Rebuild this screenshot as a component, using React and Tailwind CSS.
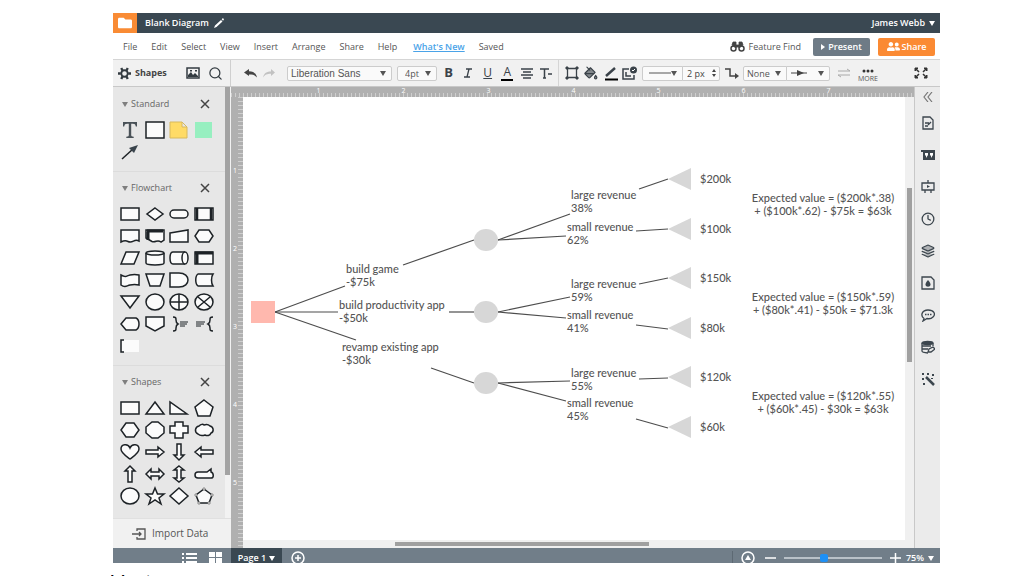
import { useState } from "react";
import { LuSearch, LuPaintBucket, LuClock, LuLayers } from "react-icons/lu";
import { FaFolder, FaUserFriends } from "react-icons/fa";

const MENU = ["File", "Edit", "Select", "View", "Insert", "Arrange", "Share", "Help"];

// every library shape is drawn in a 20 x 16 box
const FLOWCHART = [
    ["Process", <rect x="1" y="2" width="18" height="12" />],
    ["Decision", <path d="M10 2 18 8 10 14 2 8Z" />],
    ["Terminator", <rect x="1" y="4" width="18" height="8" rx="4" />],
    ["Predefined process", <><rect x="1" y="2" width="18" height="12" /><path d="M3 2v12M17 2v12" strokeWidth="2.5" /></>],
    ["Document", <path d="M1 2h18v11c-5-3-6 3-11 .5-3-1.500-5-.5-7 .5Z" />],
    ["Multiple documents", <><path d="M1 2h18v10l-3 2c-4-3-5 1-9-.5L1 10Z" /><path d="M2 3h16M3 4v8" strokeWidth="3" /></>],
    ["Manual input", <path d="M1 5 19 2v12H1Z" />],
    ["Preparation", <path d="M5 2h10l4 6-4 6H5L1 8Z" />],
    ["Data", <path d="M6 2h13l-5 12H1Z" />],
    ["Database", <><path d="M1 3v10c0 2.500 18 2.500 18 0V3" /><ellipse cx="10" cy="3" rx="9" ry="2" /></>],
    ["Direct data", <><path d="M16 2H4C0 2 0 14 4 14h12" /><ellipse cx="16" cy="8" rx="3" ry="6" /></>],
    ["Internal storage", <><rect x="1" y="2" width="18" height="12" /><path d="M1 3h18M3 2v12" strokeWidth="3" /></>],
    ["Paper tape", <path d="M1 3c5 3 5 1 9 0s5-1 9 0v10c-4-1-5-1-9 0s-5 3-9 0Z" />],
    ["Manual operation", <path d="M1 2h18l-4 12H5Z" />],
    ["Delay", <path d="M1 1h9c12 0 12 14 0 14H1Z" />],
    ["Stored data", <path d="M4 2h15c-2 3-2 9 0 12H4C1 12 1 4 4 2Z" />],
    ["Merge", <path d="M1 2h18l-9 12Z" />],
    ["Connector", <ellipse cx="10" cy="8" rx="9" ry="8" />],
    ["Or", <><ellipse cx="10" cy="8" rx="9" ry="8" /><path d="M10 0v16M1 8h18" /></>],
    ["Summing junction", <><ellipse cx="10" cy="8" rx="9" ry="8" /><path d="m4 3 12 10M16 3 4 13" /></>],
    ["Display", <path d="M6 2h10c4 2 4 10 0 12H6L1 8Z" />],
    ["Off-page link", <path d="M1 1h18v9l-9 5-9-5Z" />],
    ["Right brace note", <><path d="M4 1c3 0 3 1 3 3s0 3 2 4c-2 1-2 2-2 4s0 3-3 3" fill="none" /><path d="M11 6h8M11 8h7M11 10h5" strokeWidth="1" /></>],
    ["Left brace note", <><path d="M19 1c-3 0-3 1-3 3s0 3-2 4c2 1 2 2 2 4s0 3 3 3" fill="none" /><path d="M2 6h9M2 8h8M2 10h5" strokeWidth="1" /></>],
    ["Bracket note", <><rect x="2" y="2" width="17" height="12" stroke="none" /><path d="M4 2H1v12h3" fill="none" /></>]
];

const SHAPES = [
    ["Rectangle", <rect x="1" y="2" width="18" height="12" />],
    ["Triangle", <path d="m10 2 9 12H1Z" />],
    ["Right triangle", <path d="M1 2v12h17Z" />],
    ["Pentagon", <path d="m10 0 9 7-3 9H4L1 7Z" />],
    ["Hexagon", <path d="M6 1h8l5 7-5 7H6L1 8Z" />],
    ["Octagon", <path d="M7 0h6l6 5v6l-6 5H7l-6-5V5Z" />],
    ["Cross", <path d="M6 0h8v4h5v7h-5v5H6v-5H1V4h5Z" />],
    ["Cloud", <path d="M5 4c2-2 4-2 5-1 3-1 5 0 6 1 4 1 4 6 1 7-1 3-4 3-6 2-3 1-6 0-7-1-4-2-3-7 1-8Z" />],
    ["Heart", <path d="M10 15C6 12 1 9 1 5c0-5 7-6 9-1 2-5 9-4 9 1 0 4-5 7-9 10Z" />],
    ["Right arrow", <path d="M1 6h12V3l6 5-6 5v-3H1Z" />],
    ["Down arrow", <path d="M8 0h4v11h3l-5 5-5-5h3Z" />],
    ["Left arrow", <path d="M19 6H7V3L1 8l6 5v-3h12Z" />],
    ["Up arrow", <path d="M8 16h4V5h3l-5-5-5 5h3Z" />],
    ["Horizontal arrow", <path d="m1 8 5-5v3h8V3l5 5-5 5v-3H6v3Z" />],
    ["Vertical arrow", <path d="m10 0 5 4h-3v8h3l-5 4-5-4h3V4H5Z" />],
    ["Callout", <path d="M4 6h9l4-3v3c3 1 3 6 0 6H4C0 12 0 6 4 6Z" />],
    ["Circle", <ellipse cx="10" cy="8" rx="9" ry="8" />],
    ["Star", <path d="m10 0 2.500 6H19l-5 4 2 6-6-4-6 4 2-6-5-4h6.500Z" />],
    ["Diamond", <path d="m10 0 9 8-9 8-9-8Z" />],
    ["Polygon", <><path d="m10 1 8 6-3 8H5L2 7Z" /><path d="M9 0h2v2H9ZM17 6h2v2h-2ZM14 14h2v2h-2ZM4 14h2v2H4ZM1 6h2v2H1Z" strokeWidth=".8" stroke="#777" /></>]
];

const STANDARD = [
    ["Text", <path d="M3 0h14v4.500h-1.200c-.4-2-1-2.700-3-2.700H11.200v11c0 1.500.5 1.700 2.500 2V16H6.300v-1.200c2-.3 2.500-.5 2.500-2v-11H7.200c-2 0-2.600.7-3 2.700H3Z" fill="#4a5258" stroke="none" />],
    ["Block", <rect x="1" y="0" width="18" height="16" />],
    ["Note", <path d="M1 0h12l5 5v11H1Zm12 0v5h5" fill="#ffdb66" stroke="#d8b95c" strokeWidth="1" />],
    ["Hotspot", <rect x="1" y="0" width="17" height="16" fill="#97efc0" stroke="none" />],
    ["Line", <><path d="M2 15 13 5" /><path d="m18 1-9 3 5 5Z" fill="#3a444c" stroke="none" /></>]
];

const LINES = [
    [32, 215, 102, 189], [32, 215, 95, 215], [32, 215, 113, 243],
    [160, 168, 231, 143], [206, 215, 231, 215], [188, 271, 231, 286],
    [255, 143, 327, 117], [255, 143, 323, 139],
    [255, 215, 327, 200], [255, 215, 323, 221],
    [255, 286, 327, 284], [255, 286, 323, 304],
    [396, 92, 425, 82], [393, 134, 425, 132],
    [396, 187, 425, 181], [393, 228, 425, 232],
    [396, 282, 425, 281], [393, 322, 425, 331]
];

const LABELS = [
    { x: 103, y: 165, text: ["build game", "-$75k"] },
    { x: 96, y: 201, text: ["build productivity app", "-$50k"] },
    { x: 99, y: 243, text: ["revamp existing app", "-$30k"] },
    { x: 328, y: 91, text: ["large revenue", "38%"] },
    { x: 324, y: 123, text: ["small revenue", "62%"] },
    { x: 328, y: 180, text: ["large revenue", "59%"] },
    { x: 324, y: 211, text: ["small revenue", "41%"] },
    { x: 328, y: 269, text: ["large revenue", "55%"] },
    { x: 324, y: 299, text: ["small revenue", "45%"] }
];

const PAYOFFS = [
    { y: 82, value: "$200k" },
    { y: 132, value: "$100k" },
    { y: 181, value: "$150k" },
    { y: 231, value: "$80k" },
    { y: 280, value: "$120k" },
    { y: 330, value: "$60k" }
];

const FORMULAS = [
    { y: 94, text: ["Expected value = ($200k*.38)", "+ ($100k*.62) - $75k = $63k"] },
    { y: 193, text: ["Expected value = ($150k*.59)", "+ ($80k*.41) - $50k = $71.3k"] },
    { y: 292, text: ["Expected value = ($120k*.55)", "+ ($60k*.45) - $30k = $63k"] }
];

const Caret = ({ className = "" }) => (
    <svg viewBox="0 0 6 5" className={`h-[5px] w-[6px] shrink-0 ${className}`} fill="currentColor">
        <path d="M0 0h6L3 5Z" />
    </svg>
);

const ShapeSection = ({ title, shapes }) => {
    const [open, setOpen] = useState(true);

    return (
        <section className="border-t border-[#dcdcdc] pb-2 pl-[5px] pr-[9px] first:border-transparent">
            <div className="flex h-[31px] items-center justify-between px-1 pt-px">
                <button onClick={() => setOpen(!open)} className="flex items-center gap-[3px] text-[9px] font-medium text-[#666]">
                    <Caret className="opacity-80" />
                    {title}
                </button>
                <button aria-label={`Close ${title}`} className="mr-[2px] text-[#444]">
                    <svg viewBox="0 0 10 10" className="size-[10px]" stroke="currentColor" strokeWidth="1.5">
                        <path d="m1 1 8 8M9 1 1 9" />
                    </svg>
                </button>
            </div>
            {open && (
                <div className="grid grid-cols-4">
                    {shapes.map(([name, shape]) => (
                        <button key={name} aria-label={name} className="flex h-[22px] items-center justify-center">
                            <svg viewBox="0 0 20 16" className="h-4 w-5 overflow-visible" fill="#fbfbfb" stroke="#1d2226" strokeWidth="1.500">
                                {shape}
                            </svg>
                        </button>
                    ))}
                </div>
            )}
        </section>
    );
};

const Dropdown = ({ label, value, className, children }) => (
    <div className={`relative flex h-[15px] items-center border border-[#ccc] bg-[#fafafa] text-[#555] ${className}`}>
        <select aria-label={label} className="h-[13px] w-full appearance-none pl-[3px] leading-[13px] outline-none">
            <option>{value}</option>
        </select>
        {children}
        <Caret className="pointer-events-none absolute right-[5px]" />
    </div>
);

const Tool = ({ label, children }) => (
    <button aria-label={label} className="flex h-[18px] w-[19px] shrink-0 items-center justify-center text-[#3a4249]">
        {children}
    </button>
);

const TopBar = () => (
    <header className="flex h-5 items-center bg-[#3a4852] text-[9px] font-semibold text-white">
        <button aria-label="Documents" className="flex h-full w-6 items-center justify-center bg-[#f98b34]">
            <FaFolder className="size-[14px]" />
        </button>
        <h1 className="ml-2">Blank Diagram</h1>
        <button aria-label="Rename" className="ml-[5px]">
            <svg viewBox="0 0 10 10" className="size-[10px]" fill="currentColor">
                <path d="M0 10 1 7.500 7 2 8.500 3.500 2.500 9ZM7.700 1.300 9 0 10 1.500 9 2.800Z" />
            </svg>
        </button>
        <button className="ml-auto flex items-center gap-1 pr-[5px]">
            James Webb
            <Caret />
        </button>
    </header>
);

const MenuBar = () => (
    <nav className="flex h-[27px] items-center border-b border-[#d5d5d5] bg-white pl-[10px] pr-[5px] pt-px text-[9px] font-medium text-[#555]">
        <div className="flex gap-[14px]">
            {MENU.map((item) => (
                <button key={item}>{item}</button>
            ))}
            <a href="#whats-new" className="ml-[2px] font-semibold text-[#4aa3e8] underline">What's New</a>
            <span>Saved</span>
        </div>
        <button className="ml-auto flex items-center gap-1">
            <svg viewBox="0 0 15 11" className="h-[11px] w-[15px]" fill="#444" stroke="#444">
                <circle cx="3.500" cy="7.500" r="2.500" fill="#fff" strokeWidth="1.500" />
                <circle cx="11.500" cy="7.500" r="2.500" fill="#fff" strokeWidth="1.500" />
                <path d="M3 1h3v6l-4-3ZM12 1H9v6l4-3ZM6 4h3v2H6Z" strokeWidth=".8" />
            </svg>
            Feature Find
        </button>
        <button className="ml-3 flex h-[18px] w-[57px] items-center justify-center gap-[3px] rounded-[2px] bg-[#6e7b86] font-semibold text-white">
            <svg viewBox="0 0 4 6" className="h-[6px] w-1" fill="currentColor"><path d="M0 0v6l4-3Z" /></svg>
            Present
        </button>
        <button className="ml-2 flex h-[18px] w-[57px] items-center justify-center gap-[2px] rounded-[2px] bg-[#fb8a33] font-semibold text-white">
            <FaUserFriends className="size-[13px]" />
            Share
        </button>
    </nav>
);

const ToolBar = () => (
    <div className="flex h-[27px] items-center border-b border-[#c8c8c8] bg-[#f1f1f1] text-[9px] text-[#555]">
        <div className="flex h-full w-[118px] shrink-0 items-center border-r border-[#cfcfcf] pl-[5px]">
            <button className="flex items-center gap-1 text-[9px] font-bold text-[#444]">
                <svg viewBox="0 0 14 14" className="size-[13px]" fill="none" stroke="#333b41">
                    <circle cx="7" cy="7" r="3.500" strokeWidth="2" />
                    <path d="M3.500 1 5 4M10.500 1 9 4M3.500 13 5 10M10.500 13 9 10M0 7h3M11 7h3" strokeWidth="2.500" />
                </svg>
                Shapes
            </button>
            <button aria-label="Images" className="ml-auto text-[#333b41]">
                <svg viewBox="0 0 14 12" className="h-3 w-[14px]" fill="none" stroke="currentColor" strokeWidth="1.500">
                    <path d="M1 1h12v10H1Z" />
                    <path d="M2 10V8l3-3 2 3 2-2 3 3v1Z" fill="currentColor" stroke="none" />
                    <path d="M4 3h2v1.500H4ZM9 3h2v1.500H9Z" fill="currentColor" stroke="none" />
                </svg>
            </button>
            <button aria-label="Search" className="ml-2 mr-[7px] text-[#333b41]"><LuSearch className="size-[15px]" /></button>
        </div>

        <div className="flex shrink-0 gap-[6px] pl-[13px]">
            <button aria-label="Undo" className="text-[#444]">
                <svg viewBox="0 0 13 9" className="h-[9px] w-[13px]" fill="currentColor"><path d="M0 3.500 5 0v2.300c4 0 7 1.700 8 6.200-2-2.500-4-3-8-3V7Z" /></svg>
            </button>
            <button aria-label="Redo" className="text-[#c2c2c2]">
                <svg viewBox="0 0 12 9" className="h-[9px] w-3" fill="currentColor"><path d="M12 3.500 8 0v2.500C4 2.500 1 4 0 8.500 2 5.500 4 4.700 8 4.700V7Z" /></svg>
            </button>
        </div>

        <div className="ml-3 flex shrink-0 gap-[5px]">
            <Dropdown label="Font" value="Liberation Sans" className="w-[105px] rounded-[2px] font-['Liberation_Sans',sans-serif] text-[10px]" />
            <Dropdown label="Font size" value="4pt" className="w-[40px] rounded-[2px] pl-1" />
        </div>

        <div className="ml-[2px] flex w-[117px] shrink-0 justify-between">
            <Tool label="Bold"><b className="text-[13px]">B</b></Tool>
            <Tool label="Italic">
                <svg viewBox="0 0 8 10" className="h-[10px] w-2" fill="none" stroke="currentColor" strokeWidth="1.300"><path d="M2 1h6M0 9h6M5 1 3 9" /></svg>
            </Tool>
            <Tool label="Underline"><u className="text-[12px]">U</u></Tool>
            <Tool label="Text colour">
                <span className="border-b-2 border-black px-[2px] text-[12px] leading-[14px]">A</span>
            </Tool>
            <Tool label="Text align">
                <svg viewBox="0 0 12 12" className="size-3" stroke="currentColor" strokeWidth="1.300"><path d="M0 2h12M2 5h8M0 8h12M2 11h8" /></svg>
            </Tool>
            <Tool label="Text options">
                <svg viewBox="0 0 12 12" className="size-3" stroke="currentColor" strokeWidth="1.500"><path d="M0 2h9M4.500 2v9M3 11h3M8 7h4" /></svg>
            </Tool>
        </div>

        <div className="ml-[2px] flex h-full w-[82px] shrink-0 items-center justify-between border-l border-[#d5d5d5] pl-[3px]">
            <Tool label="Shape options">
                <svg viewBox="0 0 14 14" className="size-[14px]" fill="currentColor" stroke="currentColor">
                    <path d="M2.500 2.500h9v9h-9Z" fill="none" strokeWidth="1.300" />
                    <path d="M1 1h2v2H1ZM11 1h2v2h-2ZM1 11h2v2H1ZM11 11h2v2h-2Z" />
                </svg>
            </Tool>
            <Tool label="Fill colour"><LuPaintBucket className="size-[14px]" fill="currentColor" fillOpacity=".6" /></Tool>
            <Tool label="Line colour">
                <svg viewBox="0 0 14 16" className="h-4 w-[14px]" stroke="currentColor">
                    <path d="M2 11 11 3" strokeWidth="2.500" />
                    <path d="M1 14.500h13" stroke="#000" strokeWidth="2" />
                </svg>
            </Tool>
            <Tool label="Edit shape">
                <svg viewBox="0 0 16 14" className="h-[14px] w-4" fill="none" stroke="currentColor" strokeWidth="1.500">
                    <path d="M7 3H1v10h11V9M4 6v4h5" />
                    <circle cx="11.500" cy="4" r="3.500" fill="currentColor" stroke="none" />
                    <path d="m10 4 1 1 2-2" stroke="#fff" strokeWidth="1" />
                </svg>
            </Tool>
        </div>

        <div className="ml-[2px] flex shrink-0">
            <Dropdown label="Line style" value="" className="w-[41px] rounded-l-[2px]">
                <svg viewBox="0 0 22 4" className="pointer-events-none absolute left-[6px] h-1 w-[22px]" stroke="currentColor"><path d="M0 2h22" /></svg>
            </Dropdown>
            <div className="-ml-px flex h-[15px] w-[38px] items-center rounded-r-[2px] border border-[#ccc] bg-[#fafafa] pl-1 pr-[3px] text-[#444]">
                <input aria-label="Line width" defaultValue="2 px" className="h-[13px] w-full min-w-0 leading-[13px] outline-none" />
                <svg viewBox="0 0 4 8" className="h-2 w-1 shrink-0" fill="currentColor"><path d="M0 3h4L2 0ZM0 5h4L2 8Z" /></svg>
            </div>
        </div>

        <button aria-label="Line shape" className="ml-[5px] shrink-0 text-[#444]">
            <svg viewBox="0 0 14 12" className="h-3 w-[14px]" fill="none" stroke="currentColor" strokeWidth="1.500">
                <path d="M0 2h5v7h6" />
                <path d="m10 6 4 3-4 3Z" fill="currentColor" stroke="none" />
            </svg>
        </button>

        <div className="ml-1 flex shrink-0">
            <Dropdown label="Line start" value="None" className="w-[44px] rounded-l-[2px]" />
            <Dropdown label="Line end" value="" className="-ml-px w-[44px] rounded-r-[2px]">
                <svg viewBox="0 0 16 6" className="pointer-events-none absolute left-1 h-[6px] w-4">
                    <path d="M0 3h16" stroke="#444" />
                    <path d="m6 0 7 3-7 3Z" fill="#444" />
                </svg>
            </Dropdown>
        </div>

        <button aria-label="Swap ends" className="ml-2 shrink-0 text-[#aaa]">
            <svg viewBox="0 0 12 10" className="h-[10px] w-3" fill="none" stroke="currentColor">
                <path d="M0 3h12M9 1l3 2M0 7h12M0 7l3 2" />
            </svg>
        </button>
        <button className="ml-2 flex w-5 shrink-0 flex-col items-center gap-px pt-[5px] text-[7px] leading-[9px] text-[#555]">
            <svg viewBox="0 0 12 4" className="h-1 w-3" fill="#333"><circle cx="2" cy="2" r="1.500" /><circle cx="6" cy="2" r="1.500" /><circle cx="10" cy="2" r="1.500" /></svg>
            MORE
        </button>
        <button aria-label="Full screen" className="ml-auto mr-3 shrink-0 text-[#333]">
            <svg viewBox="0 0 14 12" className="h-3 w-[14px]" fill="currentColor" stroke="currentColor" strokeWidth="1.500">
                <path d="M1 1h3L1 4ZM13 1h-3l3 3ZM1 11h3L1 8ZM13 11h-3l3-3Z" strokeWidth="1" />
                <path d="m2 2 3 3M12 2 9 5M2 10l3-3M12 10 9 7" />
            </svg>
        </button>
    </div>
);

const ShapePanel = () => (
    <aside className="flex w-[118px] shrink-0 flex-col bg-[#e7e7e7]">
        <div className="flex flex-1">
            <div className="w-28 shrink-0">
                <ShapeSection title="Standard" shapes={STANDARD} />
                <ShapeSection title="Flowchart" shapes={FLOWCHART} />
                <ShapeSection title="Shapes" shapes={SHAPES} />
            </div>
            <div className="flex-1 bg-[#f2f2f2] pr-px">
                <div className="h-[90%] bg-[#a3a3a3]"></div>
            </div>
        </div>
        <button className="flex h-[30px] items-center gap-[6px] border-t border-[#e0e0e0] bg-[#f1f1f1] pl-[19px] text-[10px] font-medium text-[#555]">
            <svg viewBox="0 0 14 12" className="h-3 w-[14px]" fill="none" stroke="currentColor" strokeWidth="1.300">
                <path d="M5 3V1h8v10H5V9M0 6h9M7 4l2 2-2 2" />
            </svg>
            Import Data
        </button>
    </aside>
);

const Diagram = () => (
    <div className="relative h-[443px] font-[Lato,sans-serif] text-[11px] font-medium leading-[13px] text-[#555]">
        <svg viewBox="0 0 662 443" className="h-[443px] w-[662px]">
            {LINES.map(([x1, y1, x2, y2], i) => (
                <line key={i} x1={x1} y1={y1} x2={x2} y2={y2} stroke="#4d4d4d" strokeWidth="1.200" />
            ))}
            <rect x="8" y="204" width="24" height="22" fill="#ffb8ae" />
            {[143, 215, 286].map((cy) => (
                <ellipse key={cy} cx="243" cy={cy} rx="12" ry="11" fill="#d7d7d7" />
            ))}
            {PAYOFFS.map(({ y }) => (
                <path key={y} d={`M425 ${y} 448 ${y - 11}v22Z`} fill="#d7d7d7" />
            ))}
        </svg>
        {LABELS.map(({ x, y, text }) => (
            <p key={y} className="absolute whitespace-nowrap" style={{ left: x, top: y }}>
                {text[0]}<br />{text[1]}
            </p>
        ))}
        {PAYOFFS.map(({ y, value }) => (
            <p key={y} className="absolute left-[457px]" style={{ top: y - 7 }}>{value}</p>
        ))}
        {FORMULAS.map(({ y, text }) => (
            <p key={y} className="absolute left-[490px] w-[180px] whitespace-nowrap text-center" style={{ top: y }}>
                {text[0]}<br />{text[1]}
            </p>
        ))}
    </div>
);

const Canvas = () => (
    <main className="flex min-w-0 flex-1 flex-col">
        <div className="flex h-[10px] overflow-hidden bg-[#b0b0b0] bg-[repeating-linear-gradient(90deg,#cfcfcf_0_1px,transparent_1px_4px)] bg-[length:100%_4px] bg-bottom bg-no-repeat pl-[45px] text-[7px] leading-[8px] text-white">
            {[1, 2, 3, 4, 5, 6, 7].map((n) => (
                <span key={n} className="w-[85px] shrink-0 text-center">{n}</span>
            ))}
        </div>
        <div className="flex flex-1">
            <div className="w-3 shrink-0 bg-[#b0b0b0] bg-[repeating-linear-gradient(180deg,#cfcfcf_0_1px,transparent_1px_4px)] bg-[length:5px_100%] bg-right bg-no-repeat pl-[2px] pt-[35px] text-[7px] text-white">
                {[1, 2, 3, 4, 5].map((n) => (
                    <div key={n} className="flex h-[78px] items-center">{n}</div>
                ))}
            </div>
            <div className="flex min-w-0 flex-1 flex-col">
                <div className="flex flex-1">
                    <div className="min-w-0 flex-1 overflow-hidden bg-white">
                        <Diagram />
                    </div>
                    <div className="w-[9px] bg-[#f0f0f0] px-[2px] pt-[91px]">
                        <div className="h-[174px] bg-[#a0a0a0]"></div>
                    </div>
                </div>
                <div className="h-2 bg-[#f0f0f0] pl-[152px] pt-[2px]">
                    <div className="h-1 w-[49%] bg-[#a0a0a0]"></div>
                </div>
            </div>
        </div>
    </main>
);

const DOCK = [
    ["Page settings", <><path d="M2 1h7l3 3v9H2Z" /><path d="M4 7h4M4 10h3M7 9l3-3" /></>],
    ["Context", <><path d="M0 2h14v10H2V4H0Z" fill="currentColor" stroke="none" /><path d="M4 5h3v2L5 10V7.500H4ZM9 5h3v2l-2 3V7.500H9Z" fill="#fff" stroke="none" /></>],
    ["Presentation", <><path d="M1 3h12v7H1ZM7 0v3M4 10v3M10 10v3" /><path d="m6 5 3 1.500L6 8Z" fill="currentColor" stroke="none" /></>],
    ["History", <LuClock size={14} strokeWidth={2.2} />],
    ["Layers", <LuLayers size={14} fill="currentColor" fillOpacity=".35" strokeWidth={2} />],
    ["Master pages", <><path d="M1 1h9l3 3v9H1Z" /><path d="M7 4c2 2.500 2.500 3.500 2.500 4.500C9.500 11.500 4.500 11.500 4.500 8.500 4.500 7.500 5 6.500 7 4Z" fill="currentColor" stroke="none" /></>],
    ["Comments", <><path d="M3 10.500c-4-3-2-8.500 4-8.500s8 4 5 7c-2 2-4 2-6 1.500L2 13Z" /><path d="M4 6.500h1.500M6.500 6.500H8M9 6.500h1.500" /></>],
    ["Data", <><path d="M1 3v8c0 1.500 6 2 6 2M12 3v3M1 6h9M1 9h6" /><ellipse cx="6.500" cy="3" rx="5.500" ry="1.500" fill="currentColor" /><path d="m7 12 1-3 4-2 2 2-4 3Z" /></>],
    ["Magic", <><path d="m5 5 8 8" strokeWidth="2.500" /><path d="M1 1h2v2H1ZM6 1h2v2H6ZM11 2h2v2h-2ZM1 6h2v2H1ZM2 11h2v2H2ZM10 6h2v1h-2Z" fill="currentColor" stroke="none" /></>]
];

const Dock = () => (
    <aside className="flex w-[26px] shrink-0 flex-col border-l border-[#c8c8c8] bg-[#ebebeb] text-[#3c464e]">
        <button aria-label="Collapse" className="flex h-5 items-center justify-center">
            <svg viewBox="0 0 10 10" className="size-[10px]" fill="none" stroke="#777" strokeWidth="1.200"><path d="M5 0 1 5l4 5M9 0 5 5l4 5" /></svg>
        </button>
        {DOCK.map(([name, icon]) => (
            <button key={name} aria-label={name} className="flex h-8 items-center justify-center">
                <svg viewBox="0 0 14 14" className="size-[14px]" fill="none" stroke="currentColor" strokeWidth="1.300">{icon}</svg>
            </button>
        ))}
    </aside>
);

const StatusBar = () => {
    const [zoom, setZoom] = useState(40);

    return (
        <footer className="h-[15px] overflow-hidden bg-[#717e89] text-white">
            <div className="flex h-5 items-center text-[9px] font-semibold">
                <div className="flex w-[118px] shrink-0 items-center justify-end gap-3 pr-[9px]">
                    <button aria-label="List view">
                        <svg viewBox="0 0 15 12" className="h-3 w-[15px]" fill="currentColor"><path d="M0 1h2v2H0ZM4 1h11v2H4ZM0 5h2v2H0ZM4 5h11v2H4ZM0 9h2v2H0ZM4 9h11v2H4Z" /></svg>
                    </button>
                    <button aria-label="Grid view">
                        <svg viewBox="0 0 13 12" className="h-3 w-[13px]" fill="currentColor"><path d="M0 0h6v5H0ZM7 0h6v5H7ZM0 6h6v6H0ZM7 6h6v6H7Z" /></svg>
                    </button>
                </div>
                <button className="flex h-full w-[51px] items-center justify-center gap-[3px] bg-[#3a4852]">
                    Page 1
                    <Caret />
                </button>
                <button aria-label="Add page" className="ml-[9px]">
                    <svg viewBox="0 0 14 14" className="size-[14px]" fill="none" stroke="currentColor" strokeWidth="1.500"><circle cx="7" cy="7" r="6" /><path d="M7 4v6M4 7h6" /></svg>
                </button>
                <div className="ml-auto flex items-center border-l border-[#5d6973] pl-2 pr-[6px]">
                    <button aria-label="Fit page">
                        <svg viewBox="0 0 14 14" className="size-[14px]" fill="none" stroke="currentColor" strokeWidth="1.500"><circle cx="7" cy="7" r="6" /><path d="m7 4 3 5H4Z" fill="currentColor" stroke="none" /></svg>
                    </button>
                    <button aria-label="Zoom out" className="ml-[10px]">
                        <svg viewBox="0 0 11 10" className="h-[10px] w-[11px]" stroke="currentColor" strokeWidth="1.500"><path d="M0 5h11" /></svg>
                    </button>
                    <input
                        type="range"
                        aria-label="Zoom"
                        value={zoom}
                        onChange={(e) => setZoom(e.target.value)}
                        className="ml-2 h-[2px] w-[98px] appearance-none bg-[#b9c1c8] outline-none [&::-webkit-slider-thumb]:size-2 [&::-webkit-slider-thumb]:appearance-none [&::-webkit-slider-thumb]:rounded-[2px] [&::-webkit-slider-thumb]:bg-[#1e90f5]"
                    />
                    <button aria-label="Zoom in" className="ml-2">
                        <svg viewBox="0 0 11 10" className="h-[10px] w-[11px]" stroke="currentColor" strokeWidth="1.500"><path d="M0 5h11M5.500 0v10" /></svg>
                    </button>
                    <button className="ml-[5px] flex items-center gap-1">
                        75%
                        <Caret />
                    </button>
                </div>
            </div>
        </footer>
    );
};

export default function App() {
    return (
        <div className="flex min-h-screen flex-col bg-white pl-[111px] pr-[84px] pt-[13px] font-['Open_Sans',sans-serif]">
            <div className="ml-[2px] flex flex-1 flex-col">
                <TopBar />
                <MenuBar />
                <ToolBar />
                <div className="flex flex-1">
                    <ShapePanel />
                    <Canvas />
                    <Dock />
                </div>
                <StatusBar />
            </div>
            <p className="h-[13px] overflow-hidden pt-[7px] font-['Liberation_Sans',sans-serif] text-[20px] leading-[24px] text-black">Vent</p>
        </div>
    );
}
